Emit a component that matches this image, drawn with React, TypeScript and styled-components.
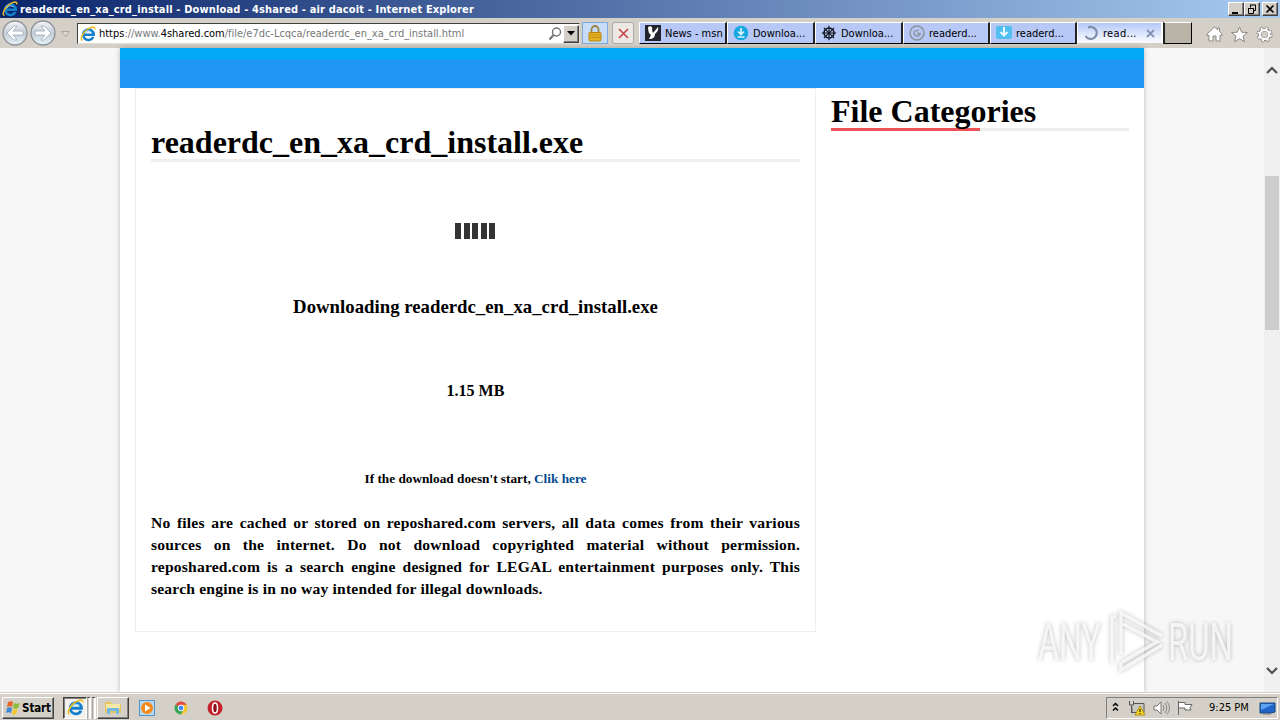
import React from "react"
import styled, { createGlobalStyle } from "styled-components"

const GlobalStyle = createGlobalStyle`
  * {
    box-sizing: border-box;
  }
  body {
    margin: 0;
    overflow: hidden;
    background: #f7f7f7;
  }
`
const uiFont = `"DejaVu Sans Condensed", "DejaVu Sans", sans-serif`

const Screen = styled.div`
  position: relative;
  display: flex;
  flex-direction: column;
  width: 1280px;
  height: 720px;
  font-family: ${uiFont};
  font-size: 11px;
  color: #000;
`
const Label = styled.span<{ $spacing?: number }>`
  white-space: pre;
  letter-spacing: ${({ $spacing = 0 }) => $spacing}px;
`

/* title bar */
const TitleBar = styled.header`
  display: flex;
  align-items: center;
  height: 18px;
  padding: 0 2px;
  background: linear-gradient(to right, #0a246a, #a6caf0);
  color: #fff;
  font-weight: 700;
  svg {
    margin-right: 2px;
  }
`
const WindowButtons = styled.div`
  display: flex;
  margin-left: auto;
`
const WindowButton = styled.span<{ $gap?: boolean }>`
  display: flex;
  width: 16px;
  height: 14px;
  margin-left: ${({ $gap }) => ($gap ? 2 : 0)}px;
  background: #d4d0c8;
  border: 1px solid;
  border-color: #fff #404040 #404040 #fff;
  box-shadow: inset -1px -1px #808080;
`

/* toolbar */
const Toolbar = styled.nav`
  display: flex;
  flex: none;
  align-items: flex-start;
  height: 30px;
  padding: 2px 7px 0 2px;
  background: #d4d0c8;
`
const NavButtons = styled.div`
  width: 75px;
  height: 28px;
`
const AddressBar = styled.div`
  display: flex;
  align-items: center;
  width: 503px;
  height: 21px;
  margin-top: 3px;
  padding: 0 0 0 2px;
  background: #fff;
  border: 1px solid;
  border-color: #404040 #e4e0d8 #e4e0d8 #404040;
  color: #777;
  b {
    font-weight: 400;
    color: #000;
  }
  > svg:first-child {
    margin-right: 3px;
  }
`
const SearchTools = styled.div`
  display: flex;
  align-items: center;
  gap: 1px;
  margin-left: auto;
`
const DropButton = styled.span`
  display: flex;
  align-items: center;
  justify-content: center;
  width: 16px;
  height: 18px;
  background: #d4d0c8;
  border: 1px solid;
  border-color: #fff #404040 #404040 #fff;
  box-shadow: inset -1px -1px #808080;
`
const LockButton = styled.span`
  display: flex;
  align-items: center;
  justify-content: center;
  width: 26px;
  height: 22px;
  margin: 2px 0 0 2px;
  background: #c6dcf7;
  border: 1px solid #7da9e0;
`
const StopButton = styled.span`
  display: flex;
  align-items: center;
  justify-content: center;
  width: 22px;
  height: 22px;
  margin: 2px 5px 0 4px;
  background: #ece9e4;
  border: 1px solid #aaa;
  border-radius: 3px;
`
const Tabs = styled.div`
  display: flex;
  height: 22px;
  margin-top: 2px;
`
const Tab = styled.div<{ $width: number; $active?: boolean }>`
  display: flex;
  align-items: center;
  width: ${({ $width }) => $width}px;
  padding-left: 5px;
  background: ${({ $active }) =>
    $active ? "linear-gradient(#b4c8f8, #f4f7ff 85%)" : "#b7c8f6"};
  border: 1px solid;
  border-width: 1px 2px 1px 1px;
  border-color: ${({ $active }) =>
    $active ? "#fff #fff #d4d0c8 #fff" : "#fff #222 #000 #fff"};
  svg {
    flex: none;
    margin-right: 4px;
  }
  svg:last-child {
    margin: 0 6px 0 auto;
  }
`
const NewTab = styled.div`
  width: 29px;
  background: #b9b4a8;
  border: 1px solid;
  border-width: 1px 1px 1px 2px;
  border-color: #fff #000 #000 #222;
`
const Commands = styled.div`
  display: flex;
  gap: 8px;
  margin: 6px 0 0 auto;
`

/* page */
const Viewport = styled.div`
  display: flex;
  flex: none;
  height: 644px;
  background: #f7f7f7;
`
const Page = styled.div`
  display: flex;
  flex-direction: column;
  width: 1024px;
  margin-left: 120px;
  background: #fff;
  box-shadow: 0 0 5px rgba(0, 0, 0, 0.25);
  font-family: "Liberation Serif", serif;
`
const Banner = styled.div`
  height: 40px;
  background: linear-gradient(#03a9f4 11px, #2196f3 12px);
`
const Columns = styled.div`
  display: flex;
  align-items: flex-start;
  gap: 15px;
  padding: 0 15px;
`
const Article = styled.main`
  display: flex;
  flex-direction: column;
  align-items: center;
  width: 681px;
  height: 544px;
  padding: 34px 15px 0;
  border: 1px solid #eee;
`
const Heading = styled.h1`
  width: 100%;
  height: 39px;
  margin: 0;
  font-size: 32px;
  line-height: 38px;
  white-space: nowrap;
  border-bottom: 3px solid #eee;
`
const Loader = styled.div`
  display: flex;
  gap: 2.5px;
  height: 16px;
  margin: 61px 1px 57px 0;
  i {
    width: 6px;
    background: #333;
  }
`
const Status = styled.h3`
  height: 22px;
  margin: 0;
  font-size: 18.8px;
  line-height: 22px;
`
const Size = styled.h4`
  height: 20px;
  margin: 63px 0 70px;
  font-size: 16px;
  line-height: 20px;
`
const Hint = styled.h5`
  height: 16px;
  margin: 0 0 25px;
  font-size: 13.28px;
  line-height: 16px;
  span {
    color: #004b91;
  }
`
const Notice = styled.p`
  width: 100%;
  margin: 0;
  font-size: 15.6px;
  font-weight: 700;
  line-height: 22px;
  letter-spacing: 0.19px;
  text-align: justify;
`
const Sidebar = styled.aside`
  width: 298px;
  padding-top: 4px;
`
const RedRule = styled.div`
  width: 149px;
  height: 3px;
  margin-top: -3px;
  background: #ef5357;
`
const Scrollbar = styled.div`
  display: flex;
  flex-direction: column;
  align-items: center;
  width: 16px;
  margin-left: auto;
  padding: 17px 0 16px;
  background: #f0f0f0;
`
const Thumb = styled.div`
  width: 14px;
  height: 154px;
  margin: 101px 0 auto;
  background: #cdcdcd;
`
const Watermark = styled.svg`
  position: absolute;
  left: 1030px;
  top: 602px;
  overflow: visible;
  filter: drop-shadow(0 0 2px rgba(0, 0, 0, 0.35));
  font-family: Roboto, sans-serif;
`

/* taskbar */
const Taskbar = styled.footer`
  display: flex;
  flex: none;
  align-items: center;
  height: 28px;
  padding: 2px 2px 0;
  background: #d4d0c8;
  border-top: 1px solid #d4d0c8;
  box-shadow: inset 0 1px #fff;
`
const TaskButton = styled.div<{ $width: number; $gap: number; $down?: boolean }>`
  display: flex;
  flex: none;
  align-items: center;
  justify-content: center;
  width: ${({ $width }) => $width}px;
  height: 22px;
  margin-right: ${({ $gap }) => $gap}px;
  background: ${({ $down }) => ($down ? "#f3f1ee" : "#d4d0c8")};
  border: 1px solid;
  border-color: ${({ $down }) =>
    $down ? "#404040 #fff #fff #404040" : "#fff #404040 #404040 #fff"};
  box-shadow: ${({ $down }) =>
    $down ? "inset 1px 1px #808080" : "inset -1px -1px #808080"};
  font-weight: 700;
  font-size: 11.5px;
`
const StackEdge = styled.span`
  width: 4px;
  height: 22px;
  margin-right: 1px;
  border: solid #fff;
  border-width: 0 2px 0 0;
  border-top: 1px solid #404040;
  border-left: 1px solid #aaa;
`
const QuickLaunch = styled.div`
  display: flex;
  gap: 18px;
`
const Tray = styled.div`
  display: flex;
  align-items: center;
  width: 172px;
  height: 22px;
  margin-left: auto;
  padding: 0 1px 0 5px;
  border: 1px solid;
  border-color: #808080 #fff #fff #808080;
  svg:last-child {
    margin-left: auto;
  }
`

const IeIcon = ({ size = 16 }: { size?: number }) => (
  <svg width={size} height={size} viewBox="0 0 16 16" fill="none">
    <path d="M13.2 11A5.3 5.3 0 1 1 13.7 8.7H4.2" stroke="#1580cc" strokeWidth="2.6" />
    <path d="M5 7.4A4 4 0 0 1 11.5 6" stroke="#7fd0f5" strokeWidth="1" />
    <path d="M2.3 14.6C-.8 12.5 4.2 4 10.5 1.6c3-1.2 4.7-.4 4.2 1.7" stroke="#f0bd23" strokeWidth="1.5" />
  </svg>
)

const Arrow = ({ x, flip }: { x: number; flip?: boolean }) => (
  <g transform={`translate(${x} 13)`}>
    <circle r="12" fill="url(#nav)" stroke="#8d9299" strokeWidth="1.3" />
    <path
      d="M-8 0L-1-7H2L-2-2H8V2H-2L2 7H-1Z"
      transform={flip ? "scale(-1 1)" : undefined}
      fill="#fff"
      stroke="#9dabb9"
      strokeWidth=".8"
    />
  </g>
)

const tabs = [
  { title: "News - msn", width: 88, icon: "msn" },
  { title: "Downloa...", width: 88, icon: "disc" },
  { title: "Downloa...", width: 88, icon: "wheel" },
  { title: "readerd...", width: 87, icon: "swirl" },
  { title: "readerd...", width: 87, icon: "box" },
]

const TabIcon = ({ name }: { name: string }) => (
  <svg width="16" height="16" viewBox="0 0 16 16" fill="none">
    {name === "msn" && (
      <>
        <path fill="#20232b" d="M0 0h16v16H0z" />
        <path fill="#fff" d="M3 2c3-2 5 0 4 3l1 3 5-6c1 3-1 5-3 7 0 3-2 5-6 5l2-4c-2-1-3-4-3-8z" />
      </>
    )}
    {name === "disc" && (
      <>
        <circle cx="8" cy="8" r="7.3" fill="#16a8df" />
        <path d="M8 3v6M5 6.5l3 3 3-3M4.5 12h7" stroke="#d9f4ff" strokeWidth="1.7" />
      </>
    )}
    {name === "wheel" && (
      <g stroke="#10131c">
        <circle cx="8" cy="8" r="5" strokeWidth="1.6" />
        <path d="M8 .8v14.4M.8 8h14.4M2.9 2.9l10.2 10.2M13.1 2.9L2.9 13.1" strokeWidth="1.1" />
      </g>
    )}
    {name === "swirl" && (
      <g stroke="#8d929c">
        <circle cx="8" cy="8" r="7" strokeWidth="1.5" />
        <path d="M9.5 4.5L7 6.5M11 7.5a3 3 0 1 1-4.5-2M8 8.5h2" strokeWidth="1.3" />
      </g>
    )}
    {name === "box" && (
      <>
        <rect y="1" width="16" height="13" rx="2" fill="#51bff0" />
        <path d="M8 2v8M4.5 7L8 10.5 11.5 7" stroke="#e8faff" strokeWidth="2" />
      </>
    )}
    {name === "ring" && (
      <path d="M5 2.6A6 6 0 1 1 2.6 11" stroke="#7d8da8" strokeWidth="2.2" />
    )}
  </svg>
)

const App = () => (
  <Screen>
    <GlobalStyle />
    <TitleBar>
      <IeIcon />
      <Label $spacing={0.15}>
        readerdc_en_xa_crd_install - Download - 4shared - air dacoit - Internet Explorer
      </Label>
      <WindowButtons>
        <WindowButton>
          <svg width="14" height="12"><path d="M3 9h6v2H3z" /></svg>
        </WindowButton>
        <WindowButton>
          <svg width="14" height="12" fill="none" stroke="#000">
            <path d="M5 2h6M5.5 2v2.5M10.5 2v5.5H8.5M3 5.5h6M3.5 5v5.5h5V5" />
          </svg>
        </WindowButton>
        <WindowButton $gap>
          <svg width="14" height="12"><path d="M3.5 2.5l7 7M10.5 2.5l-7 7" stroke="#000" strokeWidth="1.6" /></svg>
        </WindowButton>
      </WindowButtons>
    </TitleBar>

    <Toolbar>
      <NavButtons>
        <svg width="75" height="28">
          <defs>
            <linearGradient id="nav" x2="0" y2="1">
              <stop stopColor="#f5f7fa" />
              <stop offset=".5" stopColor="#c3ccd6" />
              <stop offset="1" stopColor="#e8f4fb" />
            </linearGradient>
          </defs>
          <Arrow x={13} />
          <Arrow x={41} flip />
          <path d="M59.5 11.5h8l-4 5z" fill="#dedbd5" stroke="#aaa59d" />
        </svg>
      </NavButtons>
      <AddressBar>
        <IeIcon />
        <Label $spacing={-0.02}>
          <b>https</b>://www.<b>4shared.com</b>/file/e7dc-Lcqca/readerdc_en_xa_crd_install.html
        </Label>
        <SearchTools>
          <svg width="14" height="14" fill="none" stroke="#777">
            <circle cx="8.5" cy="5" r="4" strokeWidth="1.5" />
            <path d="M5.5 8L1.5 12.5" strokeWidth="2.2" />
          </svg>
          <DropButton>
            <svg width="8" height="5"><path d="M0 0h8L4 4.5z" /></svg>
          </DropButton>
        </SearchTools>
      </AddressBar>
      <LockButton>
        <svg width="14" height="17" fill="none">
          <path d="M3.5 8V4.5a3.5 3.5 0 0 1 7 0V8" stroke="#9c8440" strokeWidth="1.8" />
          <rect x="1" y="7.5" width="12" height="8.5" rx="1" fill="#e7b322" stroke="#b78314" />
          <path d="M2 10h10M2 12.5h10" stroke="#c68f16" />
        </svg>
      </LockButton>
      <StopButton>
        <svg width="11" height="11"><path d="M1 1l9 9M10 1L1 10" stroke="#c8474c" strokeWidth="1.7" /></svg>
      </StopButton>
      <Tabs>
        {tabs.map((tab) => (
          <Tab key={tab.icon} $width={tab.width}>
            <TabIcon name={tab.icon} />
            <Label>{tab.title}</Label>
          </Tab>
        ))}
        <Tab $width={86} $active>
          <TabIcon name="ring" />
          <Label $spacing={0.3}>read...</Label>
          <svg width="9" height="9"><path d="M1 1l7 7M8 1L1 8" stroke="#8494b4" strokeWidth="1.8" /></svg>
        </Tab>
        <NewTab />
      </Tabs>
      <Commands>
        <svg width="17" height="17" fill="#fff" stroke="#8b8984">
          <path d="M1 8L8.5 1l3 2.7V2h2v3.5L16 8v1.5h-2V15h-4v-5H7v5H3V9.5H1z" />
        </svg>
        <svg width="17" height="17" fill="#fff" stroke="#8b8984">
          <path d="M8.5 1l2.2 5.2 5.8.3-4.5 3.6 1.6 5.7-5.1-3.2-5.1 3.2L5 10.1.5 6.5l5.8-.3z" />
        </svg>
        <svg width="17" height="17" viewBox="-8.5 -8.5 17 17" fill="none">
          <circle r="6.3" stroke="#8b8984" strokeWidth="3.5" strokeDasharray="2.8 2.15" />
          <circle r="4.8" stroke="#8b8984" strokeWidth="3.6" />
          <circle r="6" stroke="#fff" strokeWidth="2.6" strokeDasharray="1.8 2.91" strokeDashoffset="-.4" />
          <circle r="4.6" stroke="#fff" strokeWidth="2" />
        </svg>
      </Commands>
    </Toolbar>

    <Viewport>
      <Page>
        <Banner />
        <Columns>
          <Article>
            <Heading>readerdc_en_xa_crd_install.exe</Heading>
            <Loader>
              <i /><i /><i /><i /><i />
            </Loader>
            <Status>Downloading readerdc_en_xa_crd_install.exe</Status>
            <Size>1.15 MB</Size>
            <Hint>
              If the download doesn't start, <span>Clik here</span>
            </Hint>
            <Notice>
              No files are cached or stored on reposhared.com servers, all data
              comes from their various sources on the internet. Do not download
              copyrighted material without permission. reposhared.com is a
              search engine designed for LEGAL entertainment purposes only. This
              search engine is in no way intended for illegal downloads.
            </Notice>
          </Article>
          <Sidebar>
            <Heading>File Categories</Heading>
            <RedRule />
          </Sidebar>
        </Columns>
      </Page>
      <Scrollbar>
        <svg width="12" height="10" fill="none" stroke="#505050" strokeWidth="2.2"><path d="M1 8l5-5 5 5" /></svg>
        <Thumb />
        <svg width="12" height="10" fill="none" stroke="#505050" strokeWidth="2.2"><path d="M1 2l5 5 5-5" /></svg>
      </Scrollbar>
    </Viewport>

    <Taskbar>
      <TaskButton $width={52} $gap={9}>
        <svg width="17" height="16">
          <path d="M3 2c2-1 4-1 5 0L7 7C5 6 4 6 2 7z" fill="#e8642a" />
          <path d="M9 3c2 1 4 1 6 0l-2 5c-2 1-3 1-5 0z" fill="#8bbd36" />
          <path d="M2 8c2-1 3-1 5 0l-1 5c-2-1-3-1-5 0z" fill="#3d86d8" />
          <path d="M8 9c2 1 3 1 5 0l-2 5c-1 1-3 1-4 0z" fill="#f4c62c" />
        </svg>
        <Label $spacing={-0.1}>Start</Label>
      </TaskButton>
      <TaskButton $width={24} $gap={0} $down>
        <IeIcon size={17} />
      </TaskButton>
      <StackEdge />
      <StackEdge />
      <TaskButton $width={32} $gap={10}>
        <svg width="18" height="17">
          <path d="M1 3h6l1 2h9v9H1z" fill="#e8c760" />
          <path d="M2 5h14v5H2z" fill="#f8e9a5" />
          <path d="M3 15V9h12v6h-3v-3H6v3z" fill="#74b9e3" />
        </svg>
      </TaskButton>
      <QuickLaunch>
        <svg width="16" height="16">
          <rect x=".5" y=".5" width="15" height="15" fill="#b9daf2" stroke="#4f94cf" />
          <circle cx="8" cy="8" r="6" fill="#f28b1c" />
          <path d="M6 4.5v7l5.5-3.5z" fill="#fff" />
        </svg>
        <svg width="16" height="16" viewBox="-8 -8 16 16">
          <path d="M0 0L-5.6-3.2A6.5 6.5 0 0 1 5.6-3.2z" fill="#df4a3c" />
          <path d="M0 0L-5.6-3.2A6.5 6.5 0 0 0 0 6.5L3 1z" fill="#35a551" />
          <path d="M0-3.2H5.6A6.5 6.5 0 0 1 0 6.5L3 1z" fill="#f6c72d" />
          <circle r="2.9" fill="#4285f4" stroke="#fff" strokeWidth="1" />
        </svg>
        <svg width="16" height="16">
          <circle cx="8" cy="8" r="7.5" fill="#c3202b" />
          <ellipse cx="8" cy="8" rx="2.5" ry="5" fill="#8e1019" stroke="#fff" strokeWidth="1.5" />
        </svg>
      </QuickLaunch>
      <Tray>
        <svg width="97" height="18" fill="none">
          <path d="M1 7l2.5-2.5L6 7M1 11.5L3.5 9 6 11.5" stroke="#000" strokeWidth="1.5" />
          <path d="M21 4.5h11v9H20v-5" fill="#c9c9c4" stroke="#555" />
          <path d="M17.5 2v4h4V2M19.5 6v8" stroke="#555" />
          <path d="M28 7l5 9H23z" fill="#f8d820" stroke="#b39111" />
          <path d="M28 10v3M28 14v1" stroke="#000" />
          <path d="M42 7h3l4-4v12l-4-4h-3z" fill="#fff" stroke="#777" />
          <path d="M51 6q2 3 0 6M53 4q3.5 5 0 10M55 2.5q5 6.5 0 13" stroke="#888" />
          <path d="M66.5 2v14M67 3.5h6v2h7l-2 3 1 2.500h-6V9h-6" fill="#fff" stroke="#666" />
        </svg>
        <Label>9:25 PM</Label>
        <svg width="17" height="16">
          <path d="M1 3h15v9l-4 1H1z" fill="#2064c8" stroke="#174786" />
          <path d="M2 4h13L2 10z" fill="#5ba3ee" />
          <path d="M4 14h8" stroke="#777" />
        </svg>
      </Tray>
    </Taskbar>

    <Watermark width="215" height="76">
      <g fill="#fff" opacity=".75">
        <text x="8" y="58" fontSize="51" textLength="63" lengthAdjust="spacingAndGlyphs">ANY</text>
        <text x="138" y="58" fontSize="51" textLength="65" lengthAdjust="spacingAndGlyphs">RUN</text>
      </g>
      <g fill="none" stroke="#fff" strokeWidth="3.5" opacity=".75">
        <path d="M86 15H82V61M91 52V11L132 34M93 22L127 40 92 60M91 60V68L132 43" />
      </g>
    </Watermark>
  </Screen>
)

export default App
